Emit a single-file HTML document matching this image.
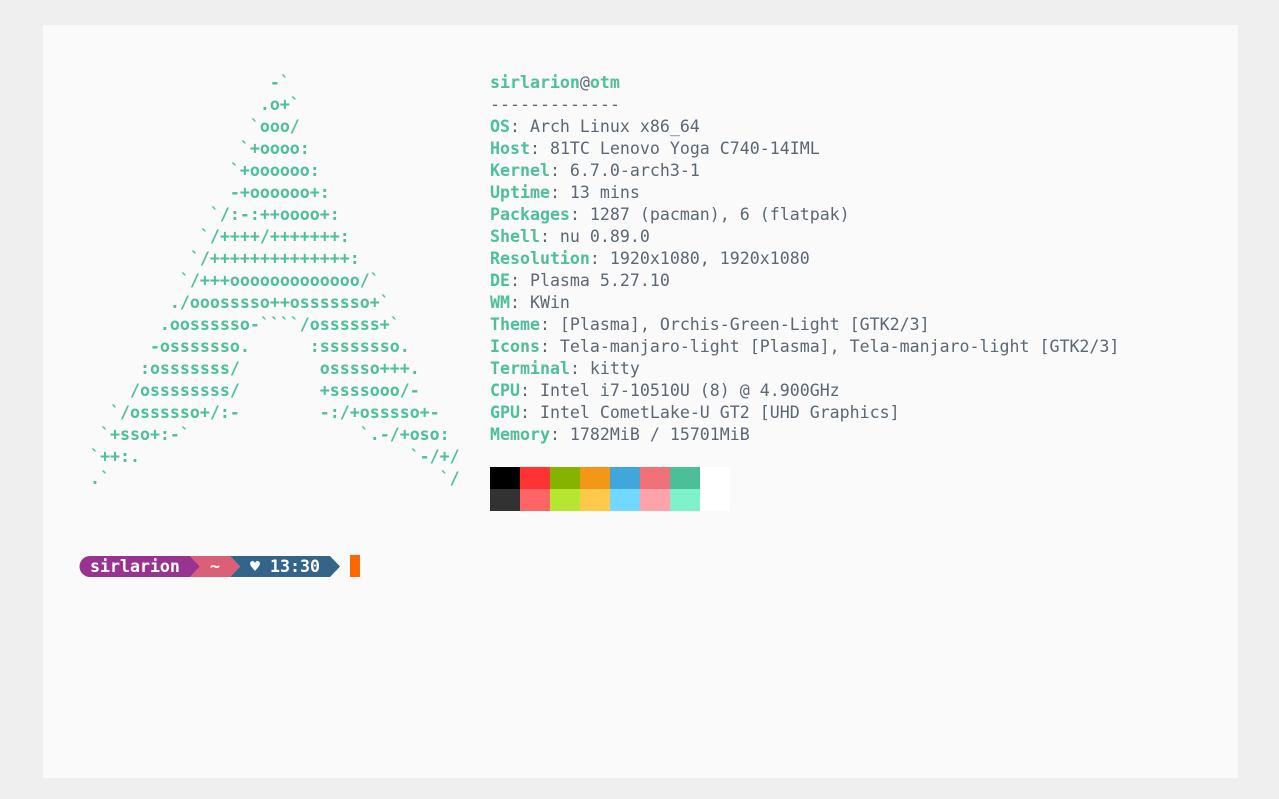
<!DOCTYPE html>
<html><head><meta charset="utf-8"><style>
html,body{margin:0;padding:0;background:#efefef;width:1279px;height:799px;overflow:hidden}
.box{position:absolute;left:43px;top:25px;width:1195px;height:753px;background:#fafafa}
pre{margin:0;position:absolute;font-family:"DejaVu Sans Mono","Liberation Mono",monospace;font-size:16.6px;line-height:22px;letter-spacing:0}
.art{left:90px;top:72px;color:#4dbf99;font-weight:bold}
.info{left:490px;top:72px;color:#5c6773}
.g{color:#4dbf99;font-weight:bold}
.sw{position:absolute;width:30px;height:22px}
.bar{position:absolute;top:556px;height:21px;font-family:"DejaVu Sans Mono","Liberation Mono",monospace;font-size:16.6px;line-height:21px;color:#fff;font-weight:bold}
</style></head><body>
<div class="box"></div>
<pre class="art">                  -&#96;
                 .o+&#96;
                &#96;ooo/
               &#96;+oooo:
              &#96;+oooooo:
              -+oooooo+:
            &#96;/:-:++oooo+:
           &#96;/++++/+++++++:
          &#96;/++++++++++++++:
         &#96;/+++ooooooooooooo/&#96;
        ./ooosssso++osssssso+&#96;
       .oossssso-&#96;&#96;&#96;&#96;/ossssss+&#96;
      -osssssso.      :ssssssso.
     :osssssss/        osssso+++.
    /ossssssss/        +ssssooo/-
  &#96;/ossssso+/:-        -:/+osssso+-
 &#96;+sso+:-&#96;                 &#96;.-/+oso:
&#96;++:.                           &#96;-/+/
.&#96;                                 &#96;/</pre>
<pre class="info"><span class="g">sirlarion</span>@<span class="g">otm</span>
-------------
<span class="g">OS</span>: Arch Linux x86_64
<span class="g">Host</span>: 81TC Lenovo Yoga C740-14IML
<span class="g">Kernel</span>: 6.7.0-arch3-1
<span class="g">Uptime</span>: 13 mins
<span class="g">Packages</span>: 1287 (pacman), 6 (flatpak)
<span class="g">Shell</span>: nu 0.89.0
<span class="g">Resolution</span>: 1920x1080, 1920x1080
<span class="g">DE</span>: Plasma 5.27.10
<span class="g">WM</span>: KWin
<span class="g">Theme</span>: [Plasma], Orchis-Green-Light [GTK2/3]
<span class="g">Icons</span>: Tela-manjaro-light [Plasma], Tela-manjaro-light [GTK2/3]
<span class="g">Terminal</span>: kitty
<span class="g">CPU</span>: Intel i7-10510U (8) @ 4.900GHz
<span class="g">GPU</span>: Intel CometLake-U GT2 [UHD Graphics]
<span class="g">Memory</span>: 1782MiB / 15701MiB</pre>
<div class="sw" style="left:490px;top:467px;background:#000"></div>
<div class="sw" style="left:520px;top:467px;background:#ff3333"></div>
<div class="sw" style="left:550px;top:467px;background:#86b300"></div>
<div class="sw" style="left:580px;top:467px;background:#f29718"></div>
<div class="sw" style="left:610px;top:467px;background:#41a6d9"></div>
<div class="sw" style="left:640px;top:467px;background:#f07178"></div>
<div class="sw" style="left:670px;top:467px;background:#4cbf99"></div>
<div class="sw" style="left:700px;top:467px;background:#ffffff"></div>
<div class="sw" style="left:490px;top:489px;background:#323232"></div>
<div class="sw" style="left:520px;top:489px;background:#ff6565"></div>
<div class="sw" style="left:550px;top:489px;background:#b8e532"></div>
<div class="sw" style="left:580px;top:489px;background:#ffc94a"></div>
<div class="sw" style="left:610px;top:489px;background:#73d8ff"></div>
<div class="sw" style="left:640px;top:489px;background:#ffa3aa"></div>
<div class="sw" style="left:670px;top:489px;background:#7ff1cb"></div>
<div class="sw" style="left:700px;top:489px;background:#ffffff"></div>
<svg style="position:absolute;left:0;top:0" width="1279" height="799">
<polygon points="230,556 330,556 340,566.5 330,577 230,577 240,566.5" fill="#33658a"/>
<polygon points="190,556 230,556 240,566.5 230,577 190,577 200,566.5" fill="#db5f78"/>
<path d="M90,556 H190 L200,566.5 L190,577 H90 A10.5,10.5 0 0 1 90,556 Z" fill="#983392"/>
<rect x="350" y="555" width="10" height="22" fill="#ff6600"/>
</svg>
<div class="bar" style="left:90px">sirlarion</div>
<div class="bar" style="left:210px">~</div>
<div class="bar" style="left:250px">♥ 13:30</div>
</body></html>
